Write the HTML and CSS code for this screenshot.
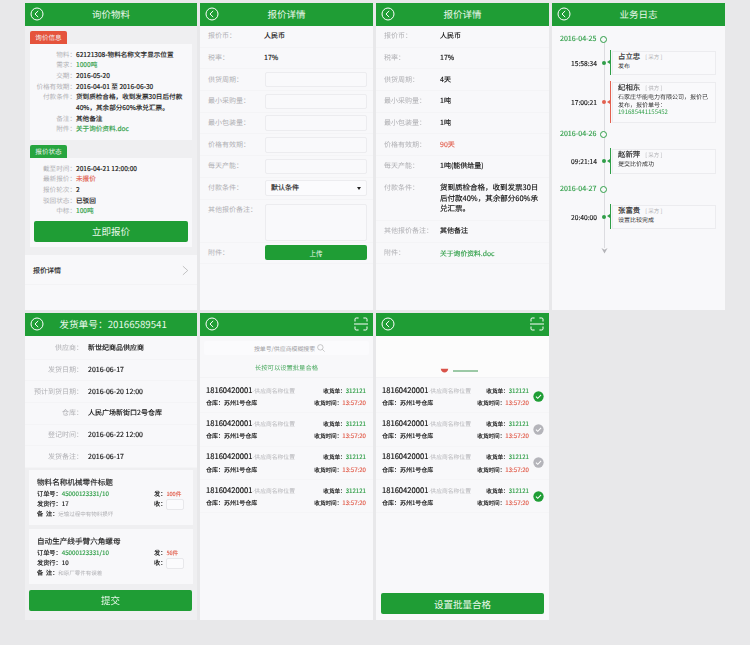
FILE: index.html
```html
<!DOCTYPE html>
<html lang="zh">
<head>
<meta charset="utf-8">
<title>询价物料</title>
<link rel="stylesheet" href="styles.css">
</head>
<body>
<svg class="defs" width="0" height="0" aria-hidden="true">
  <symbol id="back" viewBox="0 0 14 14"><circle cx="7" cy="7" r="6" fill="none" stroke="#fff" stroke-width="1"/><path d="M8.2 3.9 5 7l3.2 3.1" fill="none" stroke="#fff" stroke-width="1"/></symbol>
  <symbol id="scan" viewBox="0 0 14 14"><path d="M1 4.5V2.2Q1 1 2.2 1H4.6M9.4 1h2.4Q13 1 13 2.2V4.5M1 9.5v2.3Q1 13 2.2 13H4.6M9.4 13h2.4Q13 13 13 11.8V9.5M0 7h14" fill="none" stroke="#fff" stroke-width="1"/></symbol>
  <symbol id="check" viewBox="0 0 12 12"><circle cx="6" cy="6" r="5.6" fill="currentColor"/><path d="M3.2 6.1 5.2 8l3.6-3.7" fill="none" stroke="#fff" stroke-width="1.1"/></symbol>
</svg>
<main class="board">

  <section class="panel">
    <header class="bar"><svg class="back"><use href="#back"/></svg><h1>询价物料</h1></header>
    <div class="sections">
      <span class="tag tag-red">询价信息</span>
      <div class="card">
        <div class="info"><span>物料：</span><b>62121308-物料名称文字显示位置</b></div>
        <div class="info"><span>需求：</span><b class="green">1000吨</b></div>
        <div class="info"><span>交期：</span><b>2016-05-20</b></div>
        <div class="info"><span>价格有效期：</span><b>2016-04-01 至 2016-06-30</b></div>
        <div class="info"><span>付款条件：</span><b>货到质检合格，收到发票30日后付款40%，其余部分60%承兑汇票。</b></div>
        <div class="info"><span>备注：</span><b>其他备注</b></div>
        <div class="info"><span>附件：</span><b class="green">关于询价资料.doc</b></div>
      </div>
      <span class="tag tag-green">报价状态</span>
      <div class="card card-tight">
        <div class="info"><span>截至时间：</span><b>2016-04-21 12:00:00</b></div>
        <div class="info"><span>最新报价：</span><b class="red">未报价</b></div>
        <div class="info"><span>报价轮次：</span><b>2</b></div>
        <div class="info"><span>驳回状态：</span><b>已驳回</b></div>
        <div class="info"><span>中标：</span><b class="green">100吨</b></div>
        <button class="btn btn-quote">立即报价</button>
      </div>
    </div>
    <div class="link-row"><span>报价详情</span><svg class="chevron" viewBox="0 0 8 12"><path d="M1 1l5.5 5L1 11" fill="none" stroke="#aaa" stroke-width=".8"/></svg></div>
  </section>

  <section class="panel">
    <header class="bar"><svg class="back"><use href="#back"/></svg><h1>报价详情</h1></header>
    <div class="form">
      <div class="row"><span>报价币：</span><b>人民币</b></div>
      <div class="row"><span>税率：</span><b>17%</b></div>
      <div class="row"><span>供货周期：</span><i class="field"></i></div>
      <div class="row"><span>最小采购量：</span><i class="field"></i></div>
      <div class="row"><span>最小包装量：</span><i class="field"></i></div>
      <div class="row"><span>价格有效期：</span><i class="field"></i></div>
      <div class="row"><span>每天产能：</span><i class="field"></i></div>
      <div class="row"><span>付款条件：</span><i class="field select">默认条件<em></em></i></div>
      <div class="row row-area"><span>其他报价备注：</span><i class="field area"></i></div>
      <div class="row"><span>附件：</span><button class="btn btn-upload">上传</button></div>
    </div>
  </section>

  <section class="panel">
    <header class="bar"><svg class="back"><use href="#back"/></svg><h1>报价详情</h1></header>
    <div class="form">
      <div class="row"><span>报价币：</span><b>人民币</b></div>
      <div class="row"><span>税率：</span><b>17%</b></div>
      <div class="row"><span>供货周期：</span><b>4天</b></div>
      <div class="row"><span>最小采购量：</span><b>1吨</b></div>
      <div class="row"><span>最小包装量：</span><b>1吨</b></div>
      <div class="row"><span>价格有效期：</span><b class="red">90天</b></div>
      <div class="row"><span>每天产能：</span><b>1吨(能供给量)</b></div>
      <div class="row row-text"><span>付款条件：</span><b class="long">货到质检合格，收到发票30日后付款40%，其余部分60%承兑汇票。</b></div>
      <div class="row"><span>其他报价备注：</span><b>其他备注</b></div>
      <div class="row"><span>附件：</span><b class="green doc">关于询价资料.doc</b></div>
    </div>
  </section>

  <section class="panel">
    <header class="bar"><svg class="back"><use href="#back"/></svg><h1>业务日志</h1></header>
    <div class="timeline">
      <div class="date date-1"><span>2016-04-25</span><i></i></div>
      <div class="event e-1"><time>15:58:34</time><i class="dot"></i>
        <div class="note"><p class="who">占立忠<small>[ 采方 ]</small></p><p>发布</p></div></div>
      <div class="event event-red e-2"><time>17:00:21</time><i class="dot"></i>
        <div class="note"><p class="who">纪相东<small>[ 供方 ]</small></p><p>石家庄华能电力有限公司，报价已发布，报价单号：<br><span class="green">191685441155452</span></p></div></div>
      <div class="date date-2"><span>2016-04-26</span><i></i></div>
      <div class="event e-3"><time>09:21:14</time><i class="dot"></i>
        <div class="note"><p class="who">赵新萍<small>[ 采方 ]</small></p><p>提交比价成功</p></div></div>
      <div class="date date-3"><span>2016-04-27</span><i></i></div>
      <div class="event e-4"><time>20:40:00</time><i class="dot"></i>
        <div class="note"><p class="who">张富贵<small>[ 采方 ]</small></p><p>设置比较完成</p></div></div>
      <svg class="end-arrow" viewBox="0 0 8 8"><path d="M.5 1 4 7.5 7.5 1 4 3z" fill="#b4b4b8"/></svg>
    </div>
  </section>

  <section class="panel">
    <header class="bar"><svg class="back"><use href="#back"/></svg><h1 class="order-title">发货单号：20166589541</h1></header>
    <div class="ship">
      <div class="ship-row"><span>供应商：</span><b>新世纪商品供应商</b></div>
      <div class="ship-row"><span>发货日期：</span><b>2016-06-17</b></div>
      <div class="ship-row"><span>预计到货日期：</span><b>2016-06-20 12:00</b></div>
      <div class="ship-row"><span>仓库：</span><b>人民广场新街口2号仓库</b></div>
      <div class="ship-row"><span>登记时间：</span><b>2016-06-22 12:00</b></div>
      <div class="ship-row"><span>发货备注：</span><b>2016-06-17</b></div>
    </div>
    <div class="goods">
      <article class="good">
        <h2>物料名称机械零件标题</h2>
        <div class="good-body">
          <div class="good-left"><p>订单号：<span class="green">45000123331/10</span></p><p>发货行：17</p><p>备&nbsp;&nbsp;注：<span class="muted">运输过程中有物料损坏</span></p></div>
          <div class="good-right"><p>发：<span class="red">100件</span></p><p class="recv">收：<i class="qty"></i></p></div>
        </div>
      </article>
      <article class="good">
        <h2>自动生产线手臂六角螺母</h2>
        <div class="good-body">
          <div class="good-left"><p>订单号：<span class="green">45000123331/10</span></p><p>发货行：10</p><p>备&nbsp;&nbsp;注：<span class="muted">和原厂零件有误差</span></p></div>
          <div class="good-right"><p>发：<span class="red">56件</span></p><p class="recv">收：<i class="qty"></i></p></div>
        </div>
      </article>
      <button class="btn btn-wide">提交</button>
    </div>
  </section>

  <section class="panel">
    <header class="bar bar-scan"><svg class="back"><use href="#back"/></svg><svg class="scan"><use href="#scan"/></svg></header>
    <div class="search"><span>按单号/供应商模糊搜索</span><svg viewBox="0 0 10 10"><circle cx="4.2" cy="4.2" r="3.4" fill="none" stroke="#aaa" stroke-width=".8"/><path d="M6.7 6.7 9.5 9.5" stroke="#aaa" stroke-width=".8"/></svg></div>
    <p class="hint">长按可以设置批量合格</p>
    <div class="list">
      <div class="item"><div class="l1"><b>18160420001</b><span>-供应商名称位置</span><em>收货单：<u class="green">312121</u></em></div><div class="l2"><span>仓库：苏州1号仓库</span><em>收货时间：<u class="red">13:57:20</u></em></div></div>
      <div class="item"><div class="l1"><b>18160420001</b><span>-供应商名称位置</span><em>收货单：<u class="green">312121</u></em></div><div class="l2"><span>仓库：苏州1号仓库</span><em>收货时间：<u class="red">13:57:20</u></em></div></div>
      <div class="item"><div class="l1"><b>18160420001</b><span>-供应商名称位置</span><em>收货单：<u class="green">312121</u></em></div><div class="l2"><span>仓库：苏州1号仓库</span><em>收货时间：<u class="red">13:57:20</u></em></div></div>
      <div class="item"><div class="l1"><b>18160420001</b><span>-供应商名称位置</span><em>收货单：<u class="green">312121</u></em></div><div class="l2"><span>仓库：苏州1号仓库</span><em>收货时间：<u class="red">13:57:20</u></em></div></div>
    </div>
  </section>

  <section class="panel panel-batch">
    <header class="bar bar-scan"><svg class="back"><use href="#back"/></svg><svg class="scan"><use href="#scan"/></svg></header>
    <div class="erased"><svg class="smudge" viewBox="0 0 12 6"><path d="M1 .5h10Q10 5.5 6 5.5T1 .5z" fill="#d9534a"/></svg><i class="smudge-line"></i></div>
    <div class="list list-check">
      <div class="item"><div class="text"><div class="l1"><b>18160420001</b><span>-供应商名称位置</span><em>收货单：<u class="green">312121</u></em></div><div class="l2"><span>仓库：苏州1号仓库</span><em>收货时间：<u class="red">13:57:20</u></em></div></div><svg class="tick on"><use href="#check"/></svg></div>
      <div class="item"><div class="text"><div class="l1"><b>18160420001</b><span>-供应商名称位置</span><em>收货单：<u class="green">312121</u></em></div><div class="l2"><span>仓库：苏州1号仓库</span><em>收货时间：<u class="red">13:57:20</u></em></div></div><svg class="tick"><use href="#check"/></svg></div>
      <div class="item"><div class="text"><div class="l1"><b>18160420001</b><span>-供应商名称位置</span><em>收货单：<u class="green">312121</u></em></div><div class="l2"><span>仓库：苏州1号仓库</span><em>收货时间：<u class="red">13:57:20</u></em></div></div><svg class="tick"><use href="#check"/></svg></div>
      <div class="item"><div class="text"><div class="l1"><b>18160420001</b><span>-供应商名称位置</span><em>收货单：<u class="green">312121</u></em></div><div class="l2"><span>仓库：苏州1号仓库</span><em>收货时间：<u class="red">13:57:20</u></em></div></div><svg class="tick on"><use href="#check"/></svg></div>
    </div>
    <button class="btn btn-batch">设置批量合格</button>
  </section>

</main>
</body>
</html>
```
FILE: styles.css
```css
* { box-sizing: border-box; }
html, body { margin: 0; padding: 0; }
body {
  width: 750px; height: 645px; overflow: hidden;
  background: #e8e8ea;
  font-family: "Noto Sans CJK SC", "Noto Sans", sans-serif;
  font-size: 7px; color: #111;
  text-rendering: geometricPrecision;
}
p, h1, h2 { margin: 0; font-weight: 400; }
b, i, em, u { font-style: normal; font-weight: 400; text-decoration: none; }
b, .l2, .l1 em, .good-left, .good-right, .good h2, .who, time, .date span, .select, .link-row { -webkit-text-stroke: .15px currentColor; }
.muted, .who small { -webkit-text-stroke: 0; }
.defs { position: absolute; }
.green { color: #2f9e47; }
.red { color: #e2604f; }
.muted { color: #b0b0b4; }

.board {
  display: grid;
  grid-template-columns: 172px 173px 173px 173px;
  grid-template-rows: 307px 307px;
  gap: 3px;
  padding: 3px 0 0 25px;
  filter: blur(.25px);
}
.panel { background: #f8f8fa; display: flex; flex-direction: column; overflow: hidden; min-width: 0; }
.bar {
  height: 23px; flex: none; background: #1f9d35; color: #e9f8ea;
  display: flex; align-items: center; justify-content: center; position: relative;
}
.bar h1 { font-size: 9.5px; line-height: 1; }
.bar .order-title { font-size: 9.7px; padding-left: 4px; }
.back { position: absolute; left: 5px; top: 4px; width: 14px; height: 14px; }
.scan { position: absolute; right: 5px; top: 4px; width: 14px; height: 14px; }

/* panel 1 */
.sections { background: #efeff1; padding: 5px 5px 9px; display: flex; flex-direction: column; align-items: flex-start; height: 229px; }
.tag { width: 37px; height: 12.5px; border-radius: 2px 2px 0 0; color: #f4f4f4; font-size: 6.6px; line-height: 12.5px; text-align: center; flex: none; }
.tag-red { background: #e5533c; }
.tag-green { background: #27a53f; }
.card { width: 100%; background: #f8f8fa; padding: 5px 6px 5.5px 0; margin-bottom: 5.5px; }
.info { display: flex; font-size: 6.6px; line-height: 10.7px; }
.info > span { flex: 0 0 46px; text-align: right; color: #b0b0b4; white-space: nowrap; }
.info > b { flex: 1; min-width: 0; }
.btn { display: block; border: 0; background: #1f9d35; color: #e9f8ea; border-radius: 2px; font-family: inherit; padding: 0; text-align: center; }
.btn-quote { width: 154px; height: 21px; margin: 4.5px 0 0 4px; font-size: 9.5px; }
.link-row { height: 28px; margin-top: 2px; padding: 0 8px; display: flex; align-items: center; justify-content: space-between; border-bottom: 1px solid #f3f3f5; font-size: 7px; color: #222; }
.chevron { width: 7px; height: 11px; }

/* panels 2, 3 */
.form { display: flex; flex-direction: column; }
.row { min-height: 21.7px; display: flex; align-items: center; padding-left: 8px; border-bottom: 1px solid #f4f4f6; }
.row > span { flex: 0 0 56px; color: #b0b0b4; white-space: nowrap; }
.field { display: flex; align-items: center; width: 102px; height: 15.5px; margin-left: 1px; background: #f9f9fb; border: 1px solid #ececef; border-radius: 2px; }
.select { padding: 0 5px; justify-content: space-between; color: #222; background: #fbfbfd; }
.select em { border: 2px solid transparent; border-top: 3px solid #222; border-bottom: 0; }
.row-area { align-items: flex-start; height: 43px; padding-top: 4px; }
.row-area > span { line-height: 13px; }
.area { height: 37px; }
.btn-upload { width: 102px; height: 15px; margin-left: 1px; font-size: 6.5px; }
.row-text { padding: 5px 0 4px 8px; align-items: flex-start; min-height: 43px; }
.row-text > span { line-height: 10.8px; }
.long { width: 102px; font-size: 7.5px; line-height: 10.8px; }
.doc { font-size: 6.8px; }

/* panel 4 */
.timeline { position: relative; padding-top: 8.5px; display: flex; flex-direction: column; }
.timeline::before { content: ""; position: absolute; left: 51.5px; top: 10px; height: 212px; width: 1px; background: #dcdce0; }
.date { position: relative; display: flex; align-items: center; height: 9px; padding-left: 8px; font-size: 7.1px; line-height: 9px; color: #2f9e47; }
.date span { width: 38px; white-space: nowrap; }
.date i { width: 7px; height: 7px; margin-left: 2px; border: 1px solid #2f9e47; border-radius: 50%; background: #f8f8fa; }
.date-2 { margin-top: 7px; }
.date-3 { margin-top: 10.5px; }
.event { position: relative; display: flex; align-items: center; --c: #2f9e47; }
.event-red { --c: #e2604f; }
.e-1 { margin-top: 6.5px; height: 25px; }
.e-2 { margin-top: 6px; height: 42px; }
.e-3 { margin-top: 9px; height: 26px; }
.e-4 { margin-top: 10.5px; height: 25px; }
.event time { width: 45px; text-align: right; font-size: 6.7px; color: #222; }
.dot { width: 4px; height: 4px; border-radius: 50%; background: var(--c); margin: 0 5px 0 4.5px; flex: none; }
.dot::after { content: ""; display: block; width: 0; height: 0; margin: -.5px 0 0 5px; border: 2.5px solid transparent; border-left: 0; border-right: 3px solid var(--c); }
.note { width: 105.5px; height: 100%; margin-left: -.5px; border-left: 1.5px solid var(--c); padding: 0 0 0 1px; font-size: 6px; line-height: 7.7px; position: relative; }
.note > p { position: relative; padding-left: 6px; padding-right: 6px; color: #333; }
.note::before { content: ""; position: absolute; inset: 1px 0 0 1px; background: #f9f9fb; border: 1px solid #ececef; }
.note > .who { font-size: 7.4px; line-height: 10px; color: #222; padding-top: 2px; }
.who small { font-size: 5.5px; color: #b0b0b4; margin-left: 5px; }
.end-arrow { width: 7px; height: 7px; margin: 18px 0 0 48.5px; }

/* panel 5 */
.ship { display: flex; flex-direction: column; padding-top: 2px; }
.ship-row { height: 21.7px; display: flex; align-items: center; border-bottom: 1px solid #f4f4f6; }
.ship-row > span { flex: 0 0 58px; text-align: right; color: #b0b0b4; white-space: nowrap; }
.ship-row > b { margin-left: 5px; }
.goods { background: #efeff1; flex: 1; padding: 1.5px 4px 0; display: flex; flex-direction: column; }
.good { background: #f8f8fa; height: 55px; margin-bottom: 4px; padding: 7px 8px 0; }
.good + .good { margin-bottom: 6px; }
.good h2 { font-size: 7.6px; line-height: 11px; color: #222; }
.good-body { display: flex; justify-content: space-between; margin-top: 1px; }
.good-left p, .good-right p { font-size: 6.2px; line-height: 10px; white-space: nowrap; }
.good-left .muted { font-size: 5.5px; }
.good-right { width: 30px; margin-right: 1px; }
.good-right .red { font-size: 5.6px; }
.recv { display: flex; align-items: flex-start; }
.qty { display: block; width: 19px; height: 11px; background: #fbfbfd; border: 1px solid #e8e8eb; border-radius: 2px; }
.btn-wide { width: 163px; height: 21px; font-size: 9.5px; }

/* panels 6, 7 */
.search { height: 14px; margin: 5px 4px 0; background: #fbfbfd; border-radius: 2px; display: flex; align-items: center; justify-content: center; gap: 2px; font-size: 5.9px; color: #a2a2a6; padding-left: 6px; flex: none; }
.search svg { width: 8px; height: 8px; }
.hint { height: 23px; padding-top: 3px; line-height: 20px; text-align: center; font-size: 6.3px; color: #4ba960; border-bottom: 1px solid #f3f3f5; flex: none; }
.list { display: flex; flex-direction: column; padding-top: 2px; }
.item { height: 33.3px; padding: 0 7px 0 6px; display: flex; flex-direction: column; justify-content: center; border-bottom: 1px solid #f5f5f7; }
.l1, .l2 { display: flex; align-items: center; white-space: nowrap; }
.l1 { height: 13px; }
.l2 { height: 12px; font-size: 6px; }
.l1 b { font-size: 7.6px; }
.l1 span { font-size: 5.8px; color: #b4b4b8; }
.l1 em, .l2 em { margin-left: auto; font-size: 5.6px; }
.l1 u, .l2 u { font-size: 6.1px; }
.erased { height: 42px; background: #fcfcfc; position: relative; border-bottom: 1px solid #f3f3f5; flex: none; }
.smudge { position: absolute; left: 64px; top: 32px; width: 9px; height: 5px; }
.smudge-line { position: absolute; left: 77px; top: 34px; width: 25px; height: 1.5px; background: #9cc9a6; }
.list-check .item { flex-direction: row; align-items: center; justify-content: space-between; padding: 0 5px 0 6px; }
.text { width: 147px; }
.tick { width: 11px; height: 11px; color: #b4b4ba; flex: none; }
.tick.on { color: #1f9d35; }
.btn-batch { width: 163px; height: 21px; margin: auto 0 6px 5px; font-size: 9.5px; flex: none; }
```
